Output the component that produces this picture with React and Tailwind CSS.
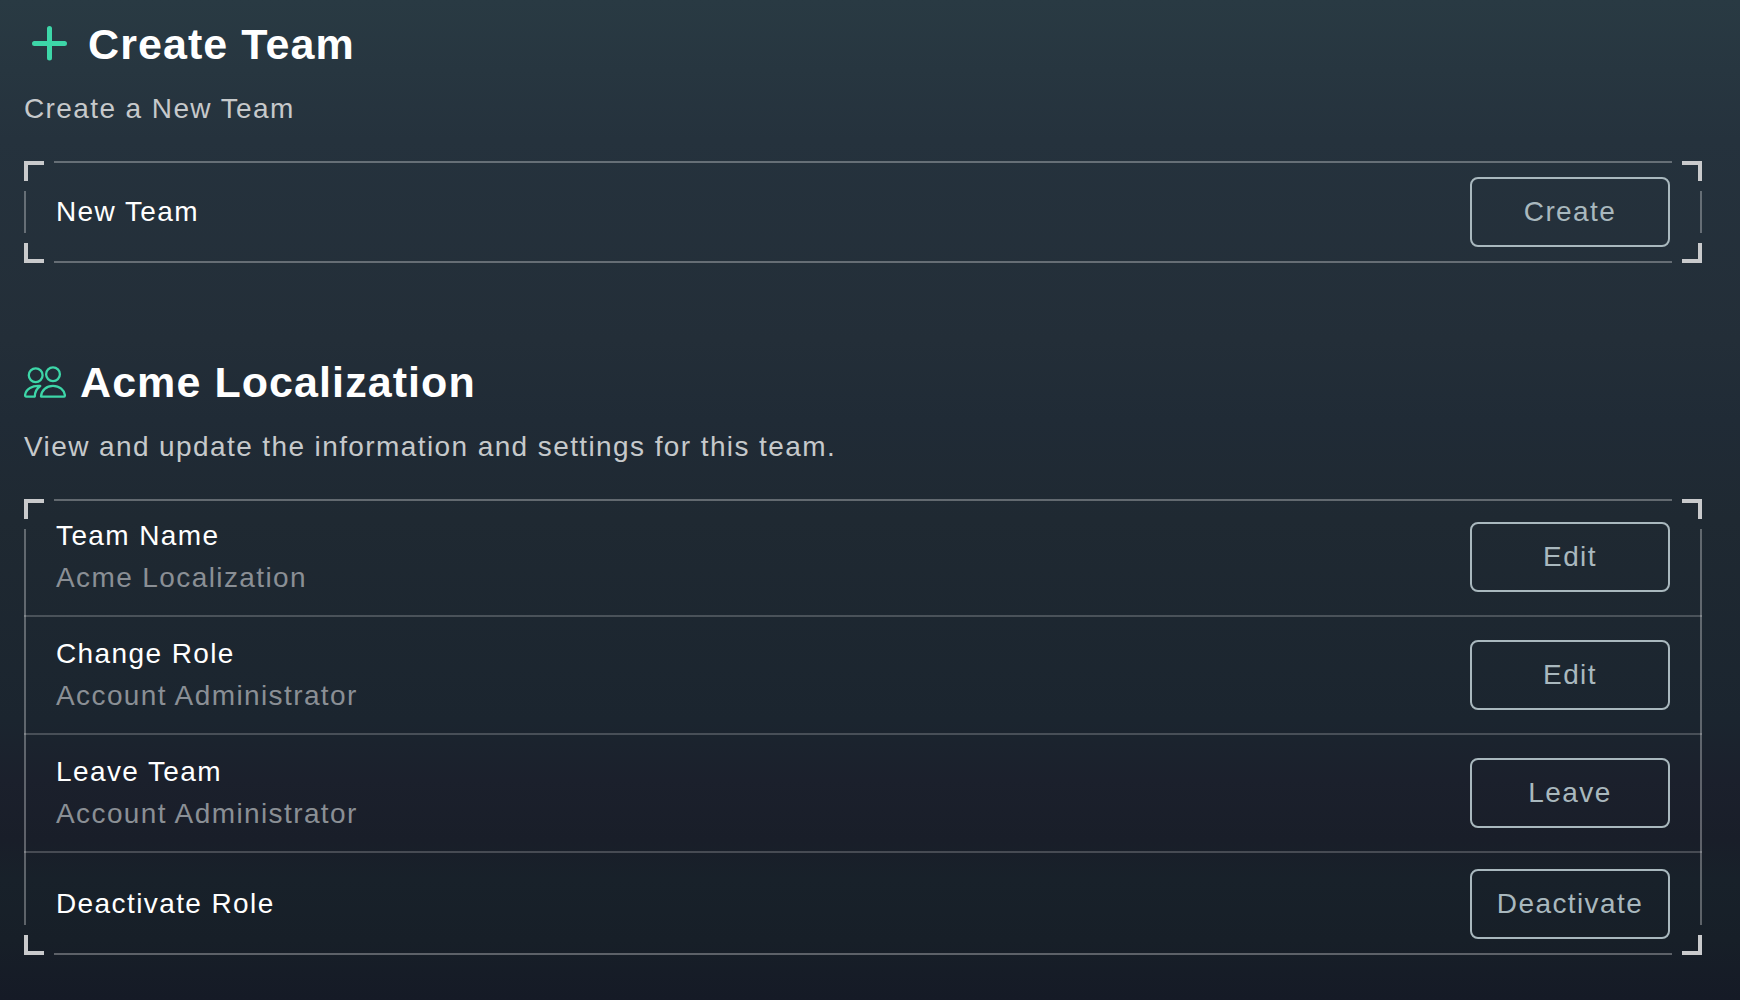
function PlusIcon() {
  return (
    <svg width="50" height="50" viewBox="0 0 50 50" fill="none" aria-hidden="true" className="shrink-0">
      <path d="M25.5 9.5v29.5M10.5 24.5H40.5" stroke="#3dd6a8" strokeWidth="5" strokeLinecap="round" />
    </svg>
  );
}

function TeamIcon() {
  return (
    <svg width="42" height="50" viewBox="0 0 42 50" fill="none" stroke="#3dd6a8" strokeWidth="2.3" strokeLinejoin="round" aria-hidden="true" className="shrink-0">
      <circle cx="11.7" cy="18.3" r="6.9" />
      <circle cx="29" cy="17.2" r="6.9" />
      <path d="M17 39.6C17.3 33.2 22.5 28.8 29 28.8S40.5 33.2 40.9 38.2Q40.9 39.6 39.6 39.6Z" />
      <path d="M16.2 29C8.5 28.2 1.8 32 1.1 38Q1 39.6 2.4 39.6H10.8C10.8 35.4 12.6 31.6 16.2 29Z" />
    </svg>
  );
}

function Frame({ children }) {
  return (
    <div className="relative mt-8">
      <span className="pointer-events-none absolute left-[30px] right-[30px] inset-y-0 border-y-2 border-white/30" />
      <span className="pointer-events-none absolute top-[30px] bottom-[30px] inset-x-0 border-x-2 border-white/30" />
      <span className="pointer-events-none absolute left-0 top-0 size-5 border-l-4 border-t-4 border-[#c9cacc]" />
      <span className="pointer-events-none absolute right-0 top-0 size-5 border-r-4 border-t-4 border-[#c9cacc]" />
      <span className="pointer-events-none absolute left-0 bottom-0 size-5 border-l-4 border-b-4 border-[#c9cacc]" />
      <span className="pointer-events-none absolute right-0 bottom-0 size-5 border-r-4 border-b-4 border-[#c9cacc]" />
      <ul className="divide-y-2 divide-white/20">{children}</ul>
    </div>
  );
}

function Row({ label, value, action }) {
  return (
    <li className="flex items-center justify-between px-8 py-4">
      <div className="leading-[42px]">
        <p className="text-white">{label}</p>
        {value && <p className="text-[#8a8f95]">{value}</p>}
      </div>
      <button
        type="button"
        aria-label={`${action}: ${label}`}
        className="h-[70px] w-[200px] shrink-0 rounded-lg border-2 border-[#a9b8be] text-[#a9b8be] tracking-wider"
      >
        {action}
      </button>
    </li>
  );
}

function Section({ icon, title, description, children }) {
  return (
    <section>
      <h2 className="flex h-[50px] items-center gap-3.5 text-[43px] leading-[50px] font-bold text-white tracking-wide">
        {icon}
        {title}
      </h2>
      <p className="mt-5 leading-10 text-[#c6c9cb]">{description}</p>
      <Frame>{children}</Frame>
    </section>
  );
}

export default function App() {
  return (
    <main className="flex min-h-screen flex-col gap-[94px] bg-[linear-gradient(to_bottom,#293a43_0%,#25323d_14%,#232e38_34%,#202b36_42%,#1f2932_52%,#1b252f_72%,#1b202c_78%,#191e29_84%,#18212a_88%,#171f28_94%,#151a26_100%)] pt-[19px] pr-[38px] pb-11 pl-6 font-['Liberation_Sans',Arial,sans-serif] text-[28px] tracking-wider">
      <Section icon={<PlusIcon />} title="Create Team" description="Create a New Team">
        <Row label="New Team" action="Create" />
      </Section>
      <Section
        icon={<TeamIcon />}
        title="Acme Localization"
        description="View and update the information and settings for this team."
      >
        <Row label="Team Name" value="Acme Localization" action="Edit" />
        <Row label="Change Role" value="Account Administrator" action="Edit" />
        <Row label="Leave Team" value="Account Administrator" action="Leave" />
        <Row label="Deactivate Role" action="Deactivate" />
      </Section>
    </main>
  );
}
